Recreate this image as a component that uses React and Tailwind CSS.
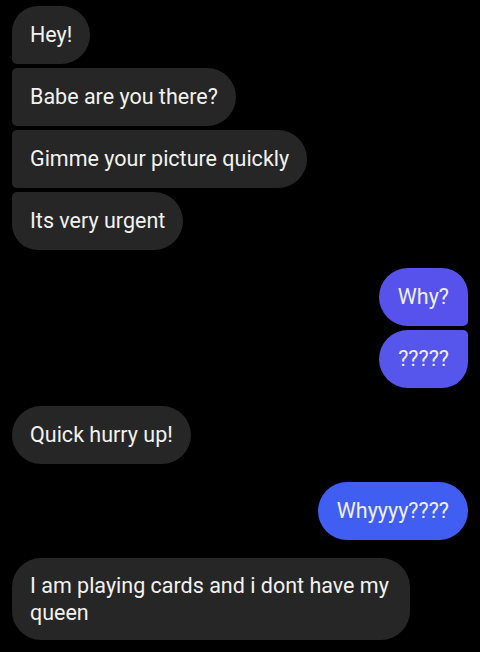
import React from "react";

const font = { fontFamily: "Roboto, 'Noto Sans', sans-serif" };

const Incoming = ({ children, corners, tall }) => (
  <div className="flex">
    <div
      className={`bg-[#262626] text-[#f2f2f2] text-[21.5px] px-[18px] ${
        tall ? "leading-[27px] py-[14px] max-w-[398px]" : "leading-[28px] py-[15px]"
      } ${corners}`}
    >
      {children}
    </div>
  </div>
);

const Outgoing = ({ children, corners, color }) => (
  <div className="flex justify-end">
    <div className={`text-[#eef0ff] text-[21.5px] leading-[28px] py-[15px] px-[19px] ${color} ${corners}`}>
      {children}
    </div>
  </div>
);

export default function App() {
  return (
    <div className="min-h-[652px] w-[480px] bg-black px-3 pt-[6px]" style={font}>
      <div className="flex flex-col gap-[4px]">
        <Incoming corners="rounded-tl-[26px] rounded-r-[29px] rounded-bl-[5px]">Hey!</Incoming>
        <Incoming corners="rounded-l-[5px] rounded-r-[29px]">Babe are you there?</Incoming>
        <Incoming corners="rounded-l-[5px] rounded-r-[29px]">Gimme your picture quickly</Incoming>
        <Incoming corners="rounded-tl-[5px] rounded-bl-[26px] rounded-r-[29px]">Its very urgent</Incoming>
      </div>

      <div className="flex flex-col gap-[4px] mt-[18px]">
        <Outgoing color="bg-[#5852ec]" corners="rounded-l-[29px] rounded-tr-[26px] rounded-br-[5px]">Why?</Outgoing>
        <Outgoing color="bg-[#5655ec]" corners="rounded-l-[29px] rounded-tr-[5px] rounded-br-[26px]">?????</Outgoing>
      </div>

      <div className="mt-[18px]">
        <Incoming corners="rounded-[29px]">Quick hurry up!</Incoming>
      </div>

      <div className="mt-[18px]">
        <Outgoing color="bg-[#405ef2]" corners="rounded-[29px]">Whyyyy????</Outgoing>
      </div>

      <div className="mt-[18px]">
        <Incoming tall corners="rounded-[29px]">I am playing cards and i dont have my queen</Incoming>
      </div>
    </div>
  );
}
